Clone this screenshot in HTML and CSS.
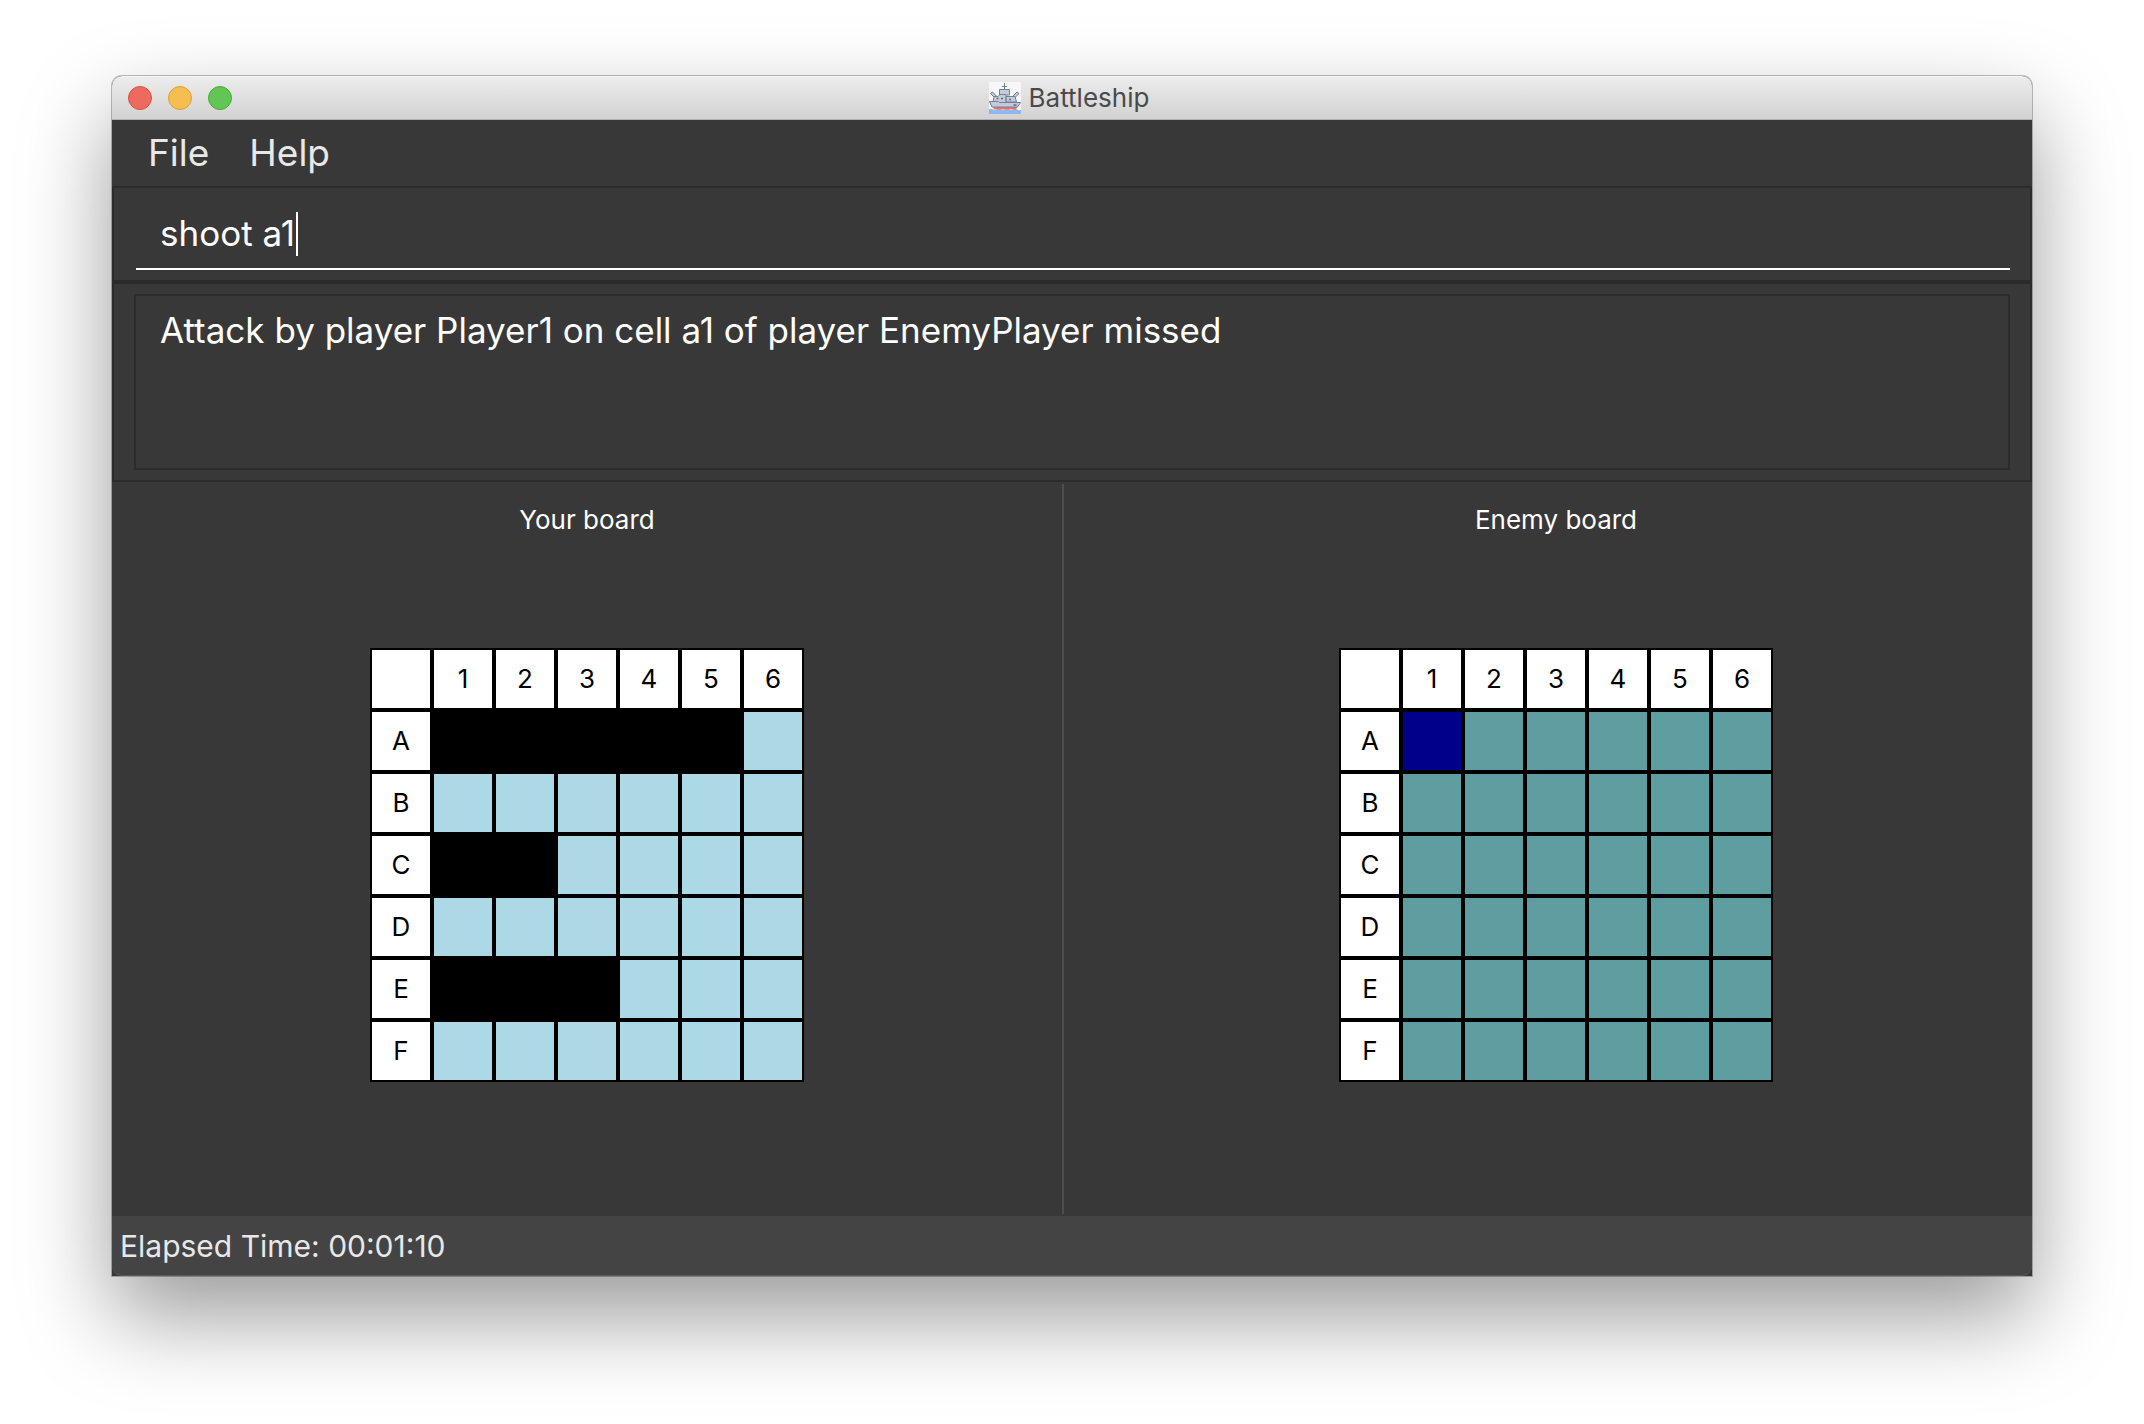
FILE: index.html
```html
<!DOCTYPE html>
<html lang="en">
<head>
<meta charset="utf-8">
<title>Battleship</title>
<link rel="stylesheet" href="styles.css">
</head>
<body>
<div class="window">
  <header class="titlebar">
    <div class="lights">
      <button class="light close" aria-label="Close"></button>
      <button class="light minimize" aria-label="Minimize"></button>
      <button class="light zoom" aria-label="Zoom"></button>
    </div>
    <h1 class="title">
      <svg class="ship" viewBox="0 0 32 32" aria-hidden="true">
        <rect width="32" height="32" fill="#f7f7f7"/>
        <path d="M0 27.500q2-1.500 4 0t4 0 4 0 4 0 4 0 4 0 4 0 4 0V32H0z" fill="#8db9ee"/>
        <path d="M4 24.500h24.500l-1.500 3H5z" fill="#ee7268"/>
        <g fill="#c3cbd9" stroke="#74819a" stroke-width="1" stroke-linejoin="round">
          <path d="M15.500 1v7M13 4.500h5" fill="none"/>
          <path d="M1.500 11.500l2-1.500 4.500 4.500-2 1.500zM30 11.500l-2-1.500-4.500 4.500 2 1.500z"/>
          <path d="M10.500 7.500h10V13h-10z"/>
          <path d="M5 14.500h4l2-2h6v8H4zM17 14.500h9l1.500 5.500H17z"/>
          <path d="M.500 19.500h9l1 1h21l-3 4.500H3z"/>
        </g>
        <path d="M7.500 16.500h2M12 16.500h2M20 17.500h2M24.500 23h3" stroke="#5f6d86" stroke-width="1.500"/>
      </svg>
      <span>Battleship</span>
    </h1>
  </header>

  <nav class="menubar">
    <button class="menu">File</button>
    <button class="menu">Help</button>
  </nav>

  <form class="command-pane">
    <div class="command-box">
      <input class="command" type="text" value="shoot a1" aria-label="Command">
      <span class="caret"></span>
    </div>
  </form>

  <section class="result-pane">
    <output class="result">Attack by player Player1 on cell a1 of player EnemyPlayer missed</output>
  </section>

  <main class="boards">
    <section class="board-pane own">
      <h2 class="board-title">Your board</h2>
      <div class="board-area">
        <table class="board">
          <tr><th></th><th>1</th><th>2</th><th>3</th><th>4</th><th>5</th><th>6</th></tr>
          <tr><th>A</th><td class="boat"></td><td class="boat"></td><td class="boat"></td><td class="boat"></td><td class="boat"></td><td></td></tr>
          <tr><th>B</th><td></td><td></td><td></td><td></td><td></td><td></td></tr>
          <tr><th>C</th><td class="boat"></td><td class="boat"></td><td></td><td></td><td></td><td></td></tr>
          <tr><th>D</th><td></td><td></td><td></td><td></td><td></td><td></td></tr>
          <tr><th>E</th><td class="boat"></td><td class="boat"></td><td class="boat"></td><td></td><td></td><td></td></tr>
          <tr><th>F</th><td></td><td></td><td></td><td></td><td></td><td></td></tr>
        </table>
      </div>
    </section>
    <div class="divider"></div>
    <section class="board-pane enemy">
      <h2 class="board-title">Enemy board</h2>
      <div class="board-area">
        <table class="board">
          <tr><th></th><th>1</th><th>2</th><th>3</th><th>4</th><th>5</th><th>6</th></tr>
          <tr><th>A</th><td class="miss"></td><td></td><td></td><td></td><td></td><td></td></tr>
          <tr><th>B</th><td></td><td></td><td></td><td></td><td></td><td></td></tr>
          <tr><th>C</th><td></td><td></td><td></td><td></td><td></td><td></td></tr>
          <tr><th>D</th><td></td><td></td><td></td><td></td><td></td><td></td></tr>
          <tr><th>E</th><td></td><td></td><td></td><td></td><td></td><td></td></tr>
          <tr><th>F</th><td></td><td></td><td></td><td></td><td></td><td></td></tr>
        </table>
      </div>
    </section>
  </main>

  <footer class="statusbar">Elapsed Time: 00:01:10</footer>
</div>
</body>
</html>
```
FILE: styles.css
```css
* {
  box-sizing: border-box;
}

body {
  display: flex;
  min-height: 100vh;
  margin: 0;
  padding: 76px 112px 148px;
  background: #fff;
  font-family: Inter, "Liberation Sans", sans-serif;
  color: #fff;
}

button,
input {
  font: inherit;
  color: inherit;
  background: none;
  border: 0;
  padding: 0;
}

.window {
  flex: 1;
  display: flex;
  flex-direction: column;
  background: #383838;
  border-radius: 10px 10px 0 0;
  box-shadow: 0 0 0 1px rgba(0, 0, 0, 0.25), 0 40px 90px rgba(0, 0, 0, 0.4);
}

.titlebar {
  display: grid;
  grid-template-columns: 1fr auto 1fr;
  align-items: center;
  height: 44px;
  padding: 0 22px 0 16px;
  background: linear-gradient(#ececec, #d2d2d2);
  border-top: 1px solid #f5f5f5;
  border-bottom: 1px solid #b0b0b0;
  border-radius: 10px 10px 0 0;
}

.lights {
  display: flex;
  gap: 16px;
}

.light {
  width: 24px;
  height: 24px;
  border: 1px solid;
  border-radius: 50%;
}

.close {
  background: #ee6a5f;
  border-color: #d55246;
}

.minimize {
  background: #f6be50;
  border-color: #dba03a;
}

.zoom {
  background: #62c655;
  border-color: #4fa73f;
}

.title {
  display: flex;
  align-items: center;
  gap: 8px;
  margin: 0;
  font-size: 26px;
  font-weight: 400;
  line-height: 32px;
  color: #4a4a4a;
}

.ship {
  width: 32px;
  height: 32px;
}

.menubar {
  display: flex;
  gap: 40px;
  height: 66px;
  padding: 0 36px;
}

.menu {
  font-size: 37px;
  line-height: 66px;
  color: #e8e8e8;
}

.command-pane {
  padding: 8px 20px 10px 22px;
  border: 2px solid #2b2b2b;
}

.command-box {
  position: relative;
  border-bottom: 2px solid #fff;
}

.command {
  display: block;
  width: 100%;
  height: 72px;
  padding: 2px 24px 0;
  font-size: 35px;
  outline: 0;
}

.caret {
  position: absolute;
  left: 160px;
  top: 16px;
  width: 2px;
  height: 44px;
  background: #fff;
}

.result-pane {
  padding: 10px 20px;
  border: 2px solid #2b2b2b;
}

.result {
  display: block;
  height: 176px;
  padding: 12px 24px;
  border: 2px solid #2b2b2b;
  font-size: 35px;
  line-height: 44px;
}

.boards {
  flex: 1;
  display: grid;
  grid-template-columns: 950fr 2px 968fr;
  padding: 2px 0;
}

.board-pane {
  display: flex;
  flex-direction: column;
  align-items: center;
  padding: 20px 0;
}

.enemy {
  padding-left: 16px;
}

.divider {
  background: #4d4d4d;
}

.board-title {
  margin: 0;
  font-size: 26px;
  font-weight: 400;
  line-height: 32px;
}

.board-area {
  flex: 1;
  display: flex;
  align-items: center;
}

.board {
  border-collapse: separate;
  border-spacing: 0;
  table-layout: fixed;
  width: 434px;
}

.board th,
.board td {
  height: 62px;
  padding: 0;
  border: 2px solid #000;
  text-align: center;
}

.board th {
  background: #fff;
  font-size: 26px;
  font-weight: 400;
  line-height: 32px;
  color: #000;
}

.own td {
  background: #add8e6;
}

.enemy td {
  background: #5f9ea0;
}

.own .boat {
  background: #000;
}

.enemy .miss {
  background: #00008b;
}

.statusbar {
  height: 60px;
  padding: 0 8px;
  background: #444;
  border-bottom: 1px solid #5a5a5a;
  border-radius: 0 0 10px 10px;
  font-size: 30px;
  line-height: 60px;
  color: #e8e8e8;
}
```
